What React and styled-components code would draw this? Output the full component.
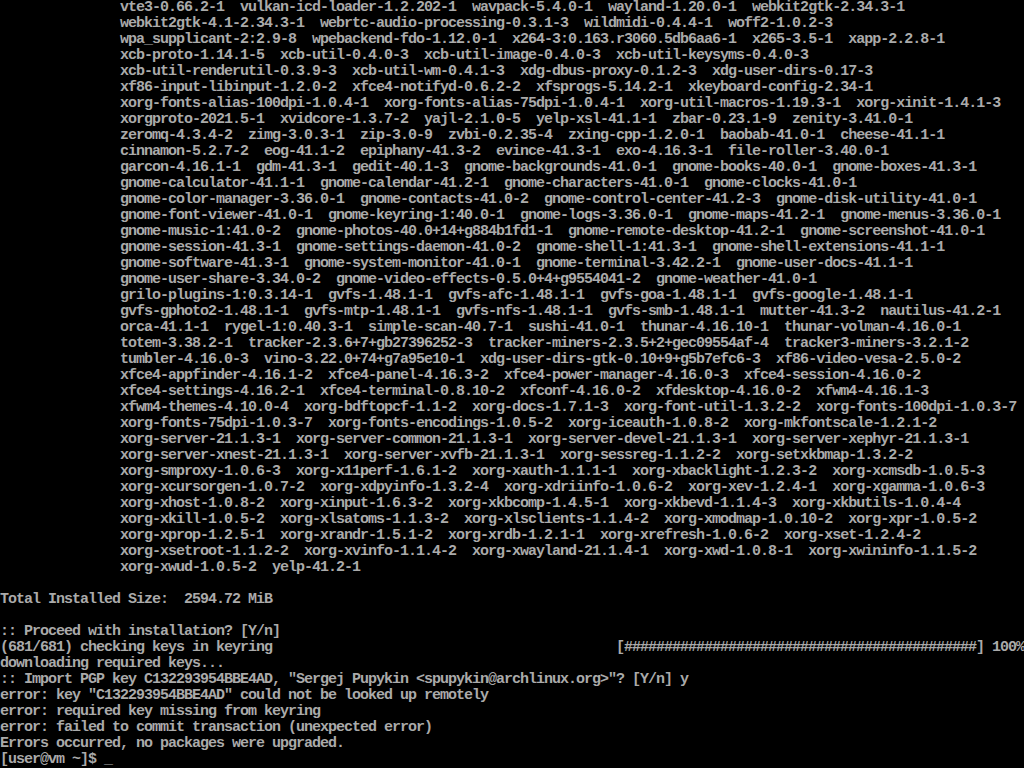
import React from "react";
import styled, { createGlobalStyle } from "styled-components";

const GlobalStyle = createGlobalStyle`
  html, body {
    margin: 0;
    padding: 0;
    background: #000;
  }
  #root {
    width: 1024px;
    height: 768px;
    overflow: hidden;
  }
`;

const Screen = styled.div`
  width: 1024px;
  height: 768px;
  background: #000;
  color: #aaaaaa;
  font-family: "Liberation Mono", "DejaVu Sans Mono", monospace;
  font-size: 15px;
  font-weight: bold;
  letter-spacing: -1px;
  display: flex;
  flex-direction: column;
  overflow: hidden;
`;

const Line = styled.div`
  height: 16px;
  line-height: 16px;
  white-space: pre;
  padding-left: ${({ $indent }) => ($indent ? "120px" : "0")};
`;

const ProgressRow = styled(Line)`
  display: flex;
  justify-content: space-between;
`;

const Cursor = styled.span`
  display: inline-block;
  width: 8px;
`;

// package list that pacman printed before the prompt
const packages = [
  "vte3-0.66.2-1  vulkan-icd-loader-1.2.202-1  wavpack-5.4.0-1  wayland-1.20.0-1  webkit2gtk-2.34.3-1",
  "webkit2gtk-4.1-2.34.3-1  webrtc-audio-processing-0.3.1-3  wildmidi-0.4.4-1  woff2-1.0.2-3",
  "wpa_supplicant-2:2.9-8  wpebackend-fdo-1.12.0-1  x264-3:0.163.r3060.5db6aa6-1  x265-3.5-1  xapp-2.2.8-1",
  "xcb-proto-1.14.1-5  xcb-util-0.4.0-3  xcb-util-image-0.4.0-3  xcb-util-keysyms-0.4.0-3",
  "xcb-util-renderutil-0.3.9-3  xcb-util-wm-0.4.1-3  xdg-dbus-proxy-0.1.2-3  xdg-user-dirs-0.17-3",
  "xf86-input-libinput-1.2.0-2  xfce4-notifyd-0.6.2-2  xfsprogs-5.14.2-1  xkeyboard-config-2.34-1",
  "xorg-fonts-alias-100dpi-1.0.4-1  xorg-fonts-alias-75dpi-1.0.4-1  xorg-util-macros-1.19.3-1  xorg-xinit-1.4.1-3",
  "xorgproto-2021.5-1  xvidcore-1.3.7-2  yajl-2.1.0-5  yelp-xsl-41.1-1  zbar-0.23.1-9  zenity-3.41.0-1",
  "zeromq-4.3.4-2  zimg-3.0.3-1  zip-3.0-9  zvbi-0.2.35-4  zxing-cpp-1.2.0-1  baobab-41.0-1  cheese-41.1-1",
  "cinnamon-5.2.7-2  eog-41.1-2  epiphany-41.3-2  evince-41.3-1  exo-4.16.3-1  file-roller-3.40.0-1",
  "garcon-4.16.1-1  gdm-41.3-1  gedit-40.1-3  gnome-backgrounds-41.0-1  gnome-books-40.0-1  gnome-boxes-41.3-1",
  "gnome-calculator-41.1-1  gnome-calendar-41.2-1  gnome-characters-41.0-1  gnome-clocks-41.0-1",
  "gnome-color-manager-3.36.0-1  gnome-contacts-41.0-2  gnome-control-center-41.2-3  gnome-disk-utility-41.0-1",
  "gnome-font-viewer-41.0-1  gnome-keyring-1:40.0-1  gnome-logs-3.36.0-1  gnome-maps-41.2-1  gnome-menus-3.36.0-1",
  "gnome-music-1:41.0-2  gnome-photos-40.0+14+g884b1fd1-1  gnome-remote-desktop-41.2-1  gnome-screenshot-41.0-1",
  "gnome-session-41.3-1  gnome-settings-daemon-41.0-2  gnome-shell-1:41.3-1  gnome-shell-extensions-41.1-1",
  "gnome-software-41.3-1  gnome-system-monitor-41.0-1  gnome-terminal-3.42.2-1  gnome-user-docs-41.1-1",
  "gnome-user-share-3.34.0-2  gnome-video-effects-0.5.0+4+g9554041-2  gnome-weather-41.0-1",
  "grilo-plugins-1:0.3.14-1  gvfs-1.48.1-1  gvfs-afc-1.48.1-1  gvfs-goa-1.48.1-1  gvfs-google-1.48.1-1",
  "gvfs-gphoto2-1.48.1-1  gvfs-mtp-1.48.1-1  gvfs-nfs-1.48.1-1  gvfs-smb-1.48.1-1  mutter-41.3-2  nautilus-41.2-1",
  "orca-41.1-1  rygel-1:0.40.3-1  simple-scan-40.7-1  sushi-41.0-1  thunar-4.16.10-1  thunar-volman-4.16.0-1",
  "totem-3.38.2-1  tracker-2.3.6+7+gb27396252-3  tracker-miners-2.3.5+2+gec09554af-4  tracker3-miners-3.2.1-2",
  "tumbler-4.16.0-3  vino-3.22.0+74+g7a95e10-1  xdg-user-dirs-gtk-0.10+9+g5b7efc6-3  xf86-video-vesa-2.5.0-2",
  "xfce4-appfinder-4.16.1-2  xfce4-panel-4.16.3-2  xfce4-power-manager-4.16.0-3  xfce4-session-4.16.0-2",
  "xfce4-settings-4.16.2-1  xfce4-terminal-0.8.10-2  xfconf-4.16.0-2  xfdesktop-4.16.0-2  xfwm4-4.16.1-3",
  "xfwm4-themes-4.10.0-4  xorg-bdftopcf-1.1-2  xorg-docs-1.7.1-3  xorg-font-util-1.3.2-2  xorg-fonts-100dpi-1.0.3-7",
  "xorg-fonts-75dpi-1.0.3-7  xorg-fonts-encodings-1.0.5-2  xorg-iceauth-1.0.8-2  xorg-mkfontscale-1.2.1-2",
  "xorg-server-21.1.3-1  xorg-server-common-21.1.3-1  xorg-server-devel-21.1.3-1  xorg-server-xephyr-21.1.3-1",
  "xorg-server-xnest-21.1.3-1  xorg-server-xvfb-21.1.3-1  xorg-sessreg-1.1.2-2  xorg-setxkbmap-1.3.2-2",
  "xorg-smproxy-1.0.6-3  xorg-x11perf-1.6.1-2  xorg-xauth-1.1.1-1  xorg-xbacklight-1.2.3-2  xorg-xcmsdb-1.0.5-3",
  "xorg-xcursorgen-1.0.7-2  xorg-xdpyinfo-1.3.2-4  xorg-xdriinfo-1.0.6-2  xorg-xev-1.2.4-1  xorg-xgamma-1.0.6-3",
  "xorg-xhost-1.0.8-2  xorg-xinput-1.6.3-2  xorg-xkbcomp-1.4.5-1  xorg-xkbevd-1.1.4-3  xorg-xkbutils-1.0.4-4",
  "xorg-xkill-1.0.5-2  xorg-xlsatoms-1.1.3-2  xorg-xlsclients-1.1.4-2  xorg-xmodmap-1.0.10-2  xorg-xpr-1.0.5-2",
  "xorg-xprop-1.2.5-1  xorg-xrandr-1.5.1-2  xorg-xrdb-1.2.1-1  xorg-xrefresh-1.0.6-2  xorg-xset-1.2.4-2",
  "xorg-xsetroot-1.1.2-2  xorg-xvinfo-1.1.4-2  xorg-xwayland-21.1.4-1  xorg-xwd-1.0.8-1  xorg-xwininfo-1.1.5-2",
  "xorg-xwud-1.0.5-2  yelp-41.2-1",
];

const tail = [
  "downloading required keys...",
  ':: Import PGP key C132293954BBE4AD, "Sergej Pupykin <spupykin@archlinux.org>"? [Y/n] y',
  'error: key "C132293954BBE4AD" could not be looked up remotely',
  "error: required key missing from keyring",
  "error: failed to commit transaction (unexpected error)",
  "Errors occurred, no packages were upgraded.",
];

export default function App() {
  return (
    <>
      <GlobalStyle />
      <Screen>
        {packages.map((p, i) => (
          <Line key={i} $indent>
            {p}
          </Line>
        ))}
        <Line> </Line>
        <Line>Total Installed Size:  2594.72 MiB</Line>
        <Line> </Line>
        <Line>:: Proceed with installation? [Y/n]</Line>
        <ProgressRow>
          <span>(681/681) checking keys in keyring</span>
          <span>{"[" + "#".repeat(44) + "] 100%"}</span>
        </ProgressRow>
        {tail.map((t, i) => (
          <Line key={i}>{t}</Line>
        ))}
        <Line>
          [user@vm ~]$ <Cursor>_</Cursor>
        </Line>
      </Screen>
    </>
  );
}
